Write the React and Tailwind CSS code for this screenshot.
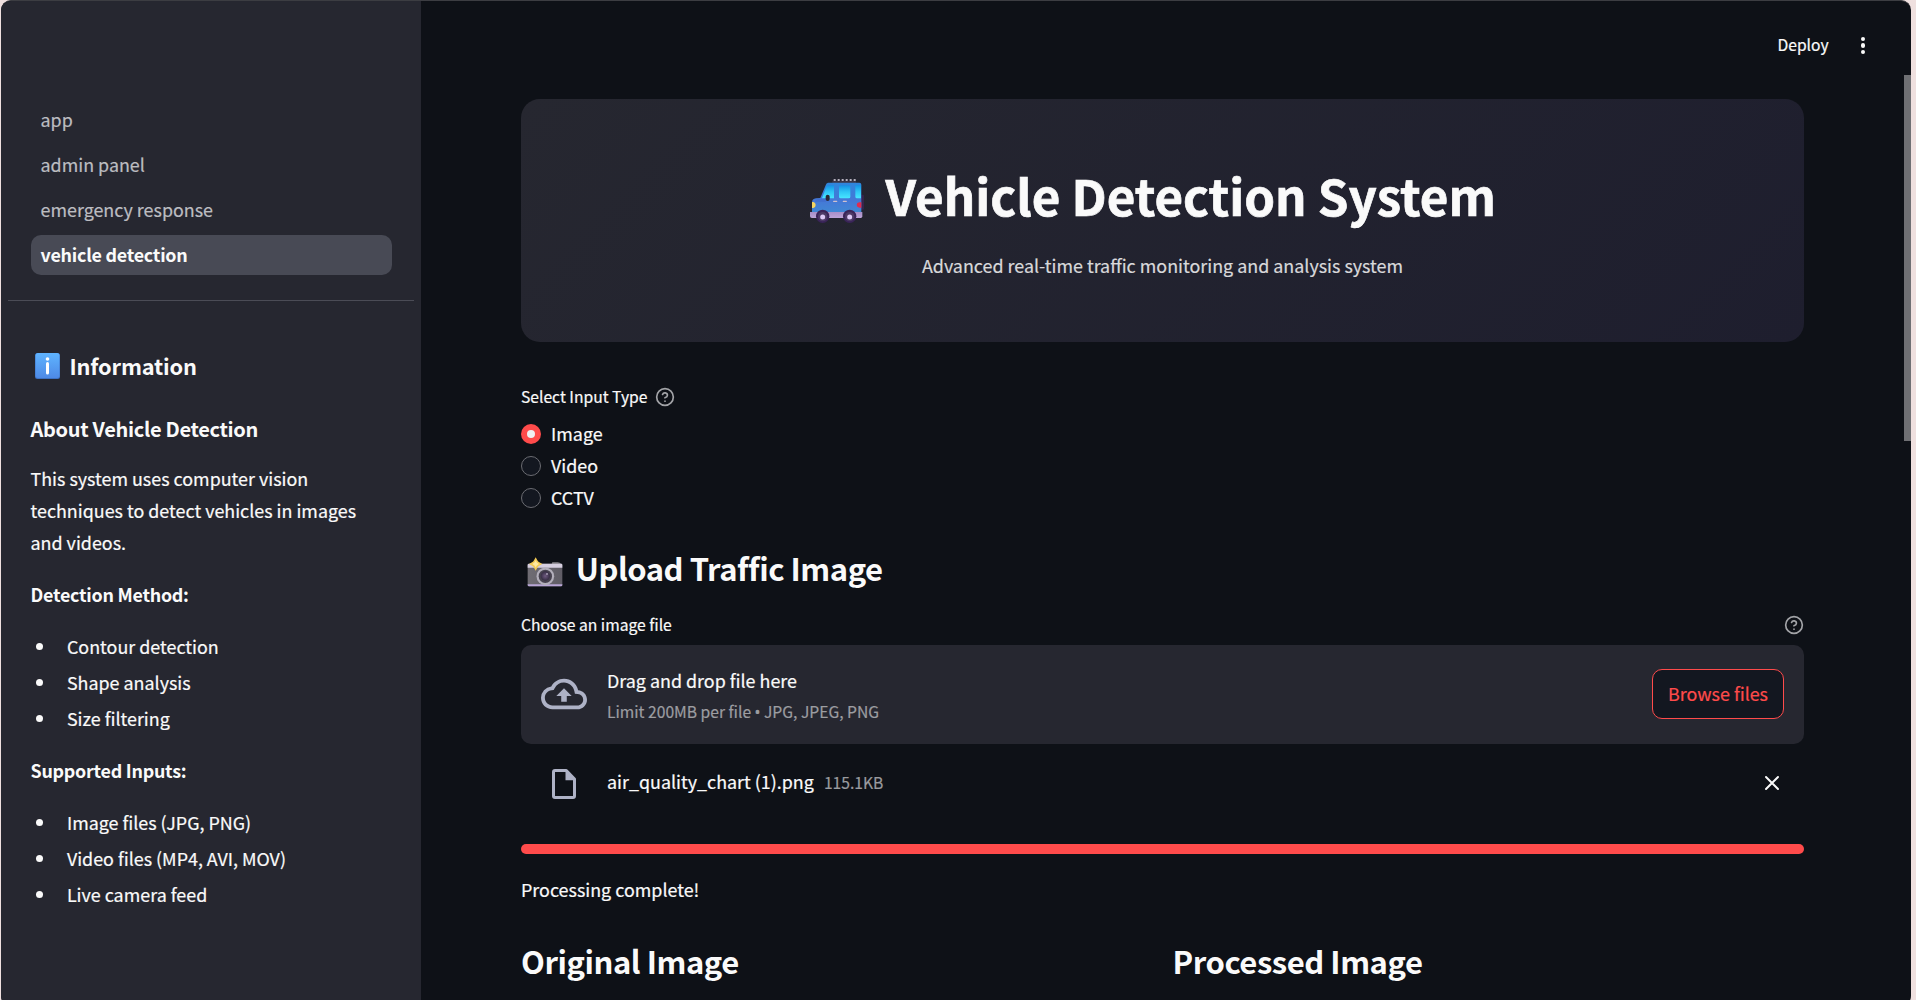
const NAV = ["app", "admin panel", "emergency response", "vehicle detection"];
const METHODS = ["Contour detection", "Shape analysis", "Size filtering"];
const INPUTS = ["Image files (JPG, PNG)", "Video files (MP4, AVI, MOV)", "Live camera feed"];
const TYPES = ["Image", "Video", "CCTV"];

function CarIcon() {
  return (
    <svg width="54" height="45" viewBox="30 24 162 135" className="mt-[11px] shrink-0">
      <defs>
        <linearGradient id="carBody" x1="0" y1="0" x2="0" y2="1">
          <stop offset="0" stopColor="#2f86dc" />
          <stop offset="0.55" stopColor="#4577d6" />
          <stop offset="1" stopColor="#3f8ad4" />
        </linearGradient>
        <linearGradient id="carGlass" x1="0" y1="0" x2="0" y2="1">
          <stop offset="0" stopColor="#1590e4" />
          <stop offset="0.5" stopColor="#2fc6f6" />
          <stop offset="1" stopColor="#48e6ff" />
        </linearGradient>
        <linearGradient id="carBase" x1="0" y1="0" x2="0" y2="1">
          <stop offset="0" stopColor="#a88fc8" />
          <stop offset="1" stopColor="#bda4d8" />
        </linearGradient>
      </defs>
      <path d="M97 32h71v7H97z" fill="#3b3547" />
      <path d="M101 30h66" stroke="#e6e0ee" strokeWidth="5" strokeDasharray="6 6" />
      <rect x="181" y="74" width="11" height="45" rx="3" fill="#35254c" />
      <path d="M84 38h94q6 0 6 6v88H36V98q0-12 12-13l13-1 16-38q2-8 7-8z" fill="url(#carBody)" />
      <path d="M83 46h19v39H66l13-34q1-5 4-5z" fill="url(#carGlass)" />
      <rect x="117" y="46" width="34" height="39" rx="5" fill="url(#carGlass)" />
      <path d="M169 45h14v40h-12q-5 0-5-5V49q0-4 3-4z" fill="url(#carGlass)" />
      <path d="M60 86h22l-5 9H44q4-8 16-9z" fill="#416fce" />
      <rect x="77" y="74" width="12" height="19" rx="6" fill="#2a2836" />
      <path d="M101 94h9M130 94h9" stroke="#cfc0cd" strokeWidth="4" strokeLinecap="round" />
      <path d="M36 96h4q7 2 7 9t-7 9h-4z" fill="#f6d561" />
      <path d="M184 97h-6q-8 1-8 8t8 8h6z" fill="#e02b50" />
      <path d="M30 126h157v13q0 5-5 5H36q-6 0-6-6z" fill="url(#carBase)" />
      <circle cx="68" cy="139" r="20" fill="#3a2459" />
      <circle cx="149" cy="139" r="20" fill="#3a2459" />
      <circle cx="68" cy="140" r="14" fill="#4d3a66" />
      <circle cx="149" cy="140" r="14" fill="#4d3a66" />
      <circle cx="68" cy="141" r="7.5" fill="#dcc8f6" />
      <circle cx="149" cy="141" r="7.5" fill="#dcc8f6" />
    </svg>
  );
}

function CameraIcon() {
  return (
    <svg width="36" height="30" viewBox="20 20 108 90" className="shrink-0">
      <defs>
        <linearGradient id="camBody" x1="0" y1="0" x2="1" y2="0">
          <stop offset="0" stopColor="#6f6c73" />
          <stop offset="1" stopColor="#605d66" />
        </linearGradient>
        <radialGradient id="lens">
          <stop offset="0" stopColor="#6f5a80" />
          <stop offset="1" stopColor="#352c42" />
        </radialGradient>
      </defs>
      <path d="M96 36h16q8 0 10 5H94z" fill="#8d8a90" />
      <rect x="22" y="40" width="104" height="68" rx="4" fill="url(#camBody)" />
      <path d="M26 40h97q3 0 3 4v8H22v-8q0-4 4-4z" fill="#d6cfe0" />
      <path d="M22 102h104v2q0 4-4 4H26q-4 0-4-4z" fill="#b9a6d6" />
      <circle cx="75" cy="78" r="26.500" fill="#b3afbb" />
      <circle cx="75" cy="78" r="20" fill="#47424f" />
      <circle cx="75" cy="77" r="14" fill="url(#lens)" />
      <circle cx="80" cy="71" r="3" fill="#a59bb2" />
      <path d="M46 21l5 9q2 4 6 6l9 5-9 5q-4 2-6 6l-5 9-5-9q-2-4-6-6l-9-5 9-5q4-2 6-6z" fill="#f4cb55" />
      <path d="M46 30l3 6 7 5-7 5-3 6-3-6-7-5 7-5z" fill="#ffe9a0" />
    </svg>
  );
}

function InfoIcon() {
  return (
    <svg width="25" height="26" viewBox="0 0 25 26" className="shrink-0">
      <defs>
        <linearGradient id="info" x1="0" y1="0" x2="0" y2="1">
          <stop offset="0" stopColor="#5fb4ff" />
          <stop offset="1" stopColor="#4e8ae6" />
        </linearGradient>
      </defs>
      <rect width="25" height="26" rx="2.500" fill="#3d72c4" />
      <rect x="0.500" width="24" height="25" rx="2.500" fill="url(#info)" />
      <circle cx="12.500" cy="6" r="1.800" fill="#fff" />
      <path d="M12.500 10.500v9.500" stroke="#fff" strokeWidth="3" strokeLinecap="round" />
    </svg>
  );
}

function HelpIcon() {
  return (
    <svg width="20" height="20" viewBox="0 0 24 24" fill="none" stroke="#a3a4a8" strokeWidth="2" strokeLinecap="round" strokeLinejoin="round" className="shrink-0">
      <circle cx="12" cy="12" r="10" />
      <path d="M9.090 9a3 3 0 0 1 5.830 1c0 2-3 3-3 3M12 17h.01" />
    </svg>
  );
}

function CloudIcon() {
  return (
    <svg width="46" height="46" viewBox="0 0 24 24" fill="#aeb2c6" className="mb-[2px] shrink-0">
      <path d="M19.350 10.040A7.490 7.490 0 0 0 12 4C9.110 4 6.600 5.640 5.350 8.040A5.994 5.994 0 0 0 0 14c0 3.310 2.690 6 6 6h13c2.760 0 5-2.240 5-5 0-2.640-2.050-4.780-4.650-4.960zM19 18H6c-2.210 0-4-1.790-4-4 0-2.050 1.530-3.760 3.560-3.970l1.070-.110.500-.950A5.469 5.469 0 0 1 12 6c2.620 0 4.880 1.860 5.390 4.430l.300 1.500 1.530.110A2.980 2.980 0 0 1 22 15c0 1.650-1.350 3-3 3zM8 13h2.550v3h2.900v-3H16l-4-4z" />
    </svg>
  );
}

function FileIcon() {
  return (
    <svg width="24" height="30" viewBox="0 0 24 30" className="shrink-0">
      <path d="M3 1.500h11.300L22.500 10v17q0 1.500-1.500 1.500H3q-1.500 0-1.500-1.500V3q0-1.500 1.500-1.500z" fill="none" stroke="#aeb2c6" strokeWidth="3" strokeLinejoin="round" />
      <path d="M13.500 1.500h1.500L23 10v1.200h-9.500z" fill="#aeb2c6" />
    </svg>
  );
}

function BulletList({ items }) {
  return (
    <ul className="mt-[18px]">
      {items.map((t) => (
        <li key={t} className="flex h-9 items-center">
          <span className="ml-[5px] mr-[24.400px] size-[7px] rounded-full bg-[#fafafa]" />
          <span className="leading-9">{t}</span>
        </li>
      ))}
    </ul>
  );
}

function Sidebar() {
  return (
    <aside className="w-[420px] shrink-0 bg-[#262730] pt-[99px]">
      <nav className="flex flex-col gap-[5px] pl-[30px] pr-[29px]">
        {NAV.map((t, i) => (
          <a
            key={t}
            className={
              i === 3
                ? "h-10 rounded-[10px] bg-[#484a55] pl-[9.500px] font-bold leading-[38px] tracking-[-0.24px]"
                : "h-10 pl-[9.500px] leading-[38px] text-[#bcbdc1]"
            }
          >
            {t}
          </a>
        ))}
      </nav>
      <div className="ml-[7px] mr-[7px] mt-[25px] h-px bg-[#4b4c56]" />
      <div className="flex flex-col pl-[29.500px] pr-[29px]">
        <h2 className="mt-[50px] flex h-[30px] items-center pl-[4.500px] text-[21.800px] font-bold leading-[30px] tracking-[-0.15px]">
          <InfoIcon />
          <span className="ml-[9.500px]">Information</span>
        </h2>
        <h3 className="mt-[35px] text-[20px] font-bold leading-[26px] tracking-[-0.32px]">About Vehicle Detection</h3>
        <p className="mt-[20px] max-w-[350px] leading-8">
          This system uses computer vision techniques to detect vehicles in images and videos.
        </p>
        <p className="mt-5 font-bold leading-8 tracking-[-0.25px]">Detection Method:</p>
        <BulletList items={METHODS} />
        <p className="mt-[18px] font-bold leading-8 tracking-[-0.25px]">Supported Inputs:</p>
        <BulletList items={INPUTS} />
      </div>
    </aside>
  );
}

function Header() {
  return (
    <header className="flex h-[98px] shrink-0 justify-end pt-8">
      <span className="text-[15.670px] leading-6">Deploy</span>
      <div className="ml-[32.400px] mr-[45.600px] mt-[4px] flex h-[17px] flex-col justify-between">
        <i className="size-[4.400px] rounded-full bg-[#fafafa]" />
        <i className="size-[4.400px] rounded-full bg-[#fafafa]" />
        <i className="size-[4.400px] rounded-full bg-[#fafafa]" />
      </div>
    </header>
  );
}

export default function App() {
  return (
    <div className="h-[1000px] w-full overflow-hidden bg-[#efe0df] pl-px pr-[5px] font-['Noto_Sans_CJK_SC','Noto_Sans',sans-serif] text-[17.900px] text-[#fafafa] [-webkit-text-stroke:0.2px] [&_.font-bold]:[-webkit-text-stroke:0]">
      <div className="relative flex h-[1006px] overflow-hidden rounded-[10px] border-t border-[#3c3d42] bg-[#0e1117]">
        <Sidebar />
        <main className="flex min-w-0 flex-1 flex-col">
          <Header />
          <div className="ml-[100px] flex w-[1283px] flex-col">
            <section className="flex h-[243px] flex-col items-center rounded-[19px] bg-linear-135 from-[#262730] to-[#1e1e2e] pt-[66px]">
              <h1 className="mr-[19px] flex h-[60px] items-center text-[49.250px] font-bold leading-[60px]">
                <CarIcon />
                <span className="ml-[21.500px] [-webkit-text-stroke:0.7px]">Vehicle Detection System</span>
              </h1>
              <p className="mt-[24px] leading-8 text-[#d9d9db]">Advanced real-time traffic monitoring and analysis system</p>
            </section>

            <div className="mt-[43px] flex h-6 items-center text-[15.670px] leading-6">
              <span>Select Input Type</span>
              <span className="ml-2">
                <HelpIcon />
              </span>
            </div>
            <div className="mt-[9px] flex flex-col">
              {TYPES.map((t, i) => (
                <label key={t} className="flex h-8 items-center">
                  {i === 0 ? (
                    <span className="mr-[10px] flex size-5 items-center justify-center rounded-full bg-[#ff4b4b]">
                      <span className="size-2 rounded-full bg-[#f0f0f2]" />
                    </span>
                  ) : (
                    <span className="mr-[10px] size-5 rounded-full border border-[#6b6c72] bg-[#131720]" />
                  )}
                  <span className="mb-[2px] leading-[30px]">{t}</span>
                </label>
              ))}
            </div>

            <h2 className="mt-[33px] flex h-[42px] items-center pl-[6px] text-[31px] font-bold leading-[42px] tracking-[-0.46px]">
              <span className="mt-[7px]">
                <CameraIcon />
              </span>
              <span className="ml-[12.700px]">Upload Traffic Image</span>
            </h2>

            <div className="mt-6 flex h-6 items-center justify-between text-[15.670px] leading-6">
              <span>Choose an image file</span>
              <HelpIcon />
            </div>
            <div className="mt-2 flex h-[99px] items-center rounded-[10px] bg-[#262730] px-5">
              <CloudIcon />
              <div className="ml-5 flex flex-1 flex-col gap-[5px]">
                <span className="leading-[30px]">Drag and drop file here</span>
                <span className="text-[15.670px] leading-6 text-[#9c9da1]">
                  Limit 200MB per file <span className="font-['Noto_Sans']">•</span> JPG, JPEG, PNG
                </span>
              </div>
              <button className="mb-[2px] h-[50px] w-[132px] rounded-[10px] border border-[#ff4b4b] bg-[#131720] pb-px leading-[30px] text-[#ff4b4b]">
                Browse files
              </button>
            </div>

            <div className="mt-[22px] flex h-9 items-center pl-[31px]">
              <FileIcon />
              <span className="mb-[6px] ml-[31px] leading-[30px]">air_quality_chart (1).png</span>
              <span className="mb-[2px] ml-[10px] flex-1 text-[15.670px] leading-6 text-[#9a9b9f]">115.1KB</span>
              <svg width="16" height="16" viewBox="0 0 16 16" stroke="#fafafa" strokeWidth="2" strokeLinecap="round" className="mb-[2px] mr-[24.500px]">
                <path d="M2 2l12 12M14 2L2 14" />
              </svg>
            </div>

            <div className="mt-[42px] h-[9.600px] rounded-full bg-[#ff4b4b]" />
            <p className="mt-[19.600px] leading-8">Processing complete!</p>

            <div className="mt-[35px] grid grid-cols-2 gap-x-5 text-[31px] font-bold leading-[42px] tracking-[-0.45px]">
              <h2>Original Image</h2>
              <h2>Processed Image</h2>
            </div>
          </div>
        </main>
        <div className="absolute right-0 top-[74px] h-[366px] w-[7px] bg-[#6f7074]" />
      </div>
    </div>
  );
}
